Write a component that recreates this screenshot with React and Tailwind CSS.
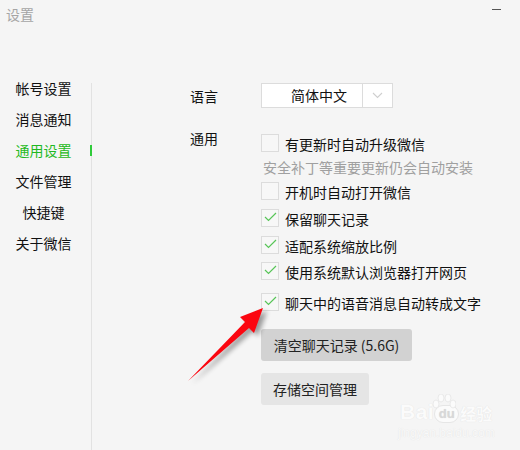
const navItems = ['帐号设置', '消息通知', '通用设置', '文件管理', '快捷键', '关于微信']

function CheckRow({ label, checked, className = '' }) {
  return (
    <div className={`flex items-center h-[18px] ${className}`}>
      <div className="w-[18px] h-[18px] border border-[#dcdcdc] bg-[#f7f7f7] flex items-center justify-center shrink-0">
        {checked && (
          <svg width="13" height="10" viewBox="0 0 13 10" fill="none" stroke="#58c558" strokeWidth="1.2" className="-mt-[2px]">
            <path d="M1 5 L4.5 8.5 L12 1" />
          </svg>
        )}
      </div>
      <span className="ml-[6px] text-[14px] leading-[18px] text-[#111] mt-[2px] whitespace-nowrap">{label}</span>
    </div>
  )
}

function Arrow() {
  const shape = 'M8 81 L65 22 L60 17 L83 8 L74 33 L69 28 Z'
  return (
    <svg className="absolute left-[180px] top-[300px]" width="100" height="90" viewBox="0 0 100 90">
      <defs>
        <filter id="arrowShadow" x="-20%" y="-20%" width="140%" height="140%">
          <feGaussianBlur stdDeviation="2.5" />
        </filter>
      </defs>
      <path d={shape} transform="translate(4 3)" fill="#000" opacity="0.38" filter="url(#arrowShadow)" />
      <path d={shape} fill="#fb0610" />
    </svg>
  )
}

function Watermark() {
  return (
    <div className="absolute left-[400px] top-[393px] w-[115px] h-[50px] text-[#fbfbfb] font-['Liberation_Sans',sans-serif]" style={{ textShadow: '0 0 1px #dcdcdc' }}>
      <div className="flex items-end h-[30px]">
        <span className="text-[21px] leading-[22px] font-bold tracking-[0.5px]">Bai</span>
        <span className="w-[25px] h-[18px] rounded-[9px] bg-[#fbfbfb] border border-[#e6e6e6] text-[#d8d8d8] text-[13px] leading-[15px] font-bold text-center">du</span>
        <span className="ml-[1px] text-[16px] leading-[20px] font-bold font-['Noto_Sans_CJK_SC',sans-serif]">经验</span>
      </div>
      <svg className="absolute left-[32px] top-[1px]" width="24" height="16" viewBox="0 0 24 16" fill="#fbfbfb" stroke="#e6e6e6" strokeWidth="0.8">
        <ellipse cx="4" cy="10" rx="3" ry="4" />
        <ellipse cx="9" cy="4" rx="3" ry="4" />
        <ellipse cx="16" cy="4" rx="3" ry="4" />
        <ellipse cx="21" cy="10" rx="3" ry="4" />
      </svg>
      <div className="text-[12px] leading-[14px] mt-[3px] -ml-[2px] text-[#f9f9f9] whitespace-nowrap">jingyan.baidu.com</div>
    </div>
  )
}

export default function App() {
  return (
    <div className="relative w-[520px] h-[450px] overflow-hidden bg-[#f5f5f5] font-['Noto_Sans_CJK_SC',sans-serif]">
      {/* Title bar */}
      <div className="flex justify-between h-[83px] pl-[6px] pr-[19px]">
        <span className="text-[14px] leading-[18px] mt-[5px] text-[#a5a5a5]">设置</span>
        <div className="w-[9px] h-px bg-[#555] mt-[9px]" />
      </div>

      <div className="flex h-[367px]">
        {/* Sidebar */}
        <nav className="w-[92px] shrink-0 border-r border-[#e2e2e2]">
          <div className="flex flex-col -mt-[11px]">
            {navItems.map(item => {
              const active = item === '通用设置'
              return (
                <div key={item} className="relative h-[31px] pr-[4px] flex items-center justify-center text-[14px] leading-[18px]">
                  <span className={active ? 'text-[#1fb922]' : 'text-[#111]'}>{item}</span>
                  {active && <div className="absolute right-[-1px] top-[11px] w-[2px] h-[11px] bg-[#2fcb3a]" />}
                </div>
              )
            })}
          </div>
        </nav>

        {/* Content */}
        <div className="flex-1 pl-[98px]">
          <div className="flex">
            <span className="w-[71px] text-[14px] leading-[18px] mt-[4px] text-[#111]">语言</span>
            <div className="flex w-[132px] h-[25px] border border-[#dcdcdc] bg-white">
              <div className="w-[101px] border-r border-[#dcdcdc] text-[14px] leading-[23px] text-[#111] pl-[29px]">简体中文</div>
              <div className="flex-1 flex items-center justify-center">
                <svg width="11" height="7" viewBox="0 0 11 7" fill="none" stroke="#cfcfcf" strokeWidth="1.1">
                  <path d="M1 1 L5.5 5.5 L10 1" />
                </svg>
              </div>
            </div>
          </div>

          <div className="flex mt-[26px]">
            <span className="w-[71px] text-[14px] leading-[18px] mt-[-5px] text-[#111]">通用</span>
            <div className="flex flex-col">
              <CheckRow label="有更新时自动升级微信" />
              <div className="text-[14px] leading-[18px] text-[#a0a0a0] mt-[6px] ml-[2px] whitespace-nowrap">安全补丁等重要更新仍会自动安装</div>
              <CheckRow label="开机时自动打开微信" className="mt-[6px]" />
              <CheckRow label="保留聊天记录" checked className="mt-[9px]" />
              <CheckRow label="适配系统缩放比例" checked className="mt-[9px]" />
              <CheckRow label="使用系统默认浏览器打开网页" checked className="mt-[8px]" />
              <CheckRow label="聊天中的语音消息自动转成文字" checked className="mt-[13px]" />
              <button className="mt-[18px] w-[151px] h-[32px] rounded-[3px] bg-[#d2d2d2] text-[14px] text-[#222] text-center">清空聊天记录 (5.6G)</button>
              <button className="mt-[12px] w-[108px] h-[32px] rounded-[3px] bg-[#e5e5e5] text-[14px] text-[#222] text-center">存储空间管理</button>
            </div>
          </div>
        </div>
      </div>

      <Arrow />
      <Watermark />
    </div>
  )
}
